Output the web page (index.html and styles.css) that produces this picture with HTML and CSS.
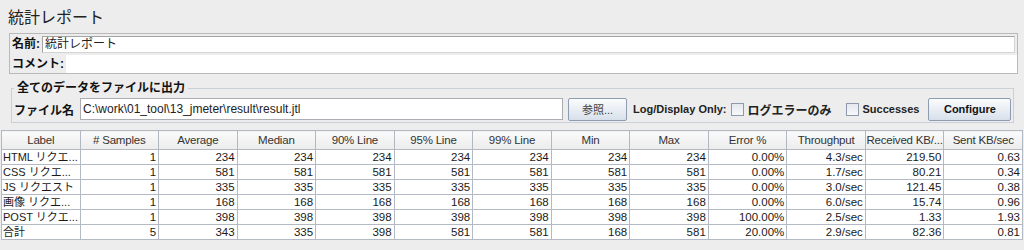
FILE: index.html
```html
<!DOCTYPE html>
<html lang="ja">
<head>
<meta charset="utf-8">
<title>統計レポート</title>
<link rel="stylesheet" href="styles.css">
</head>
<body>
<div class="title">統計レポート</div>
<div class="name-panel">
  <div class="row name-row"><span class="lbl">名前:</span><div class="field">統計レポート</div></div>
  <div class="row comment-row"><span class="lbl">コメント:</span><div class="field comment"></div></div>
</div>
<fieldset class="file-panel">
  <legend>全てのデータをファイルに出力</legend>
  <div class="file-row">
    <span class="file-lbl">ファイル名</span>
    <div class="path">C:\work\01_tool\13_jmeter\result\result.jtl</div>
    <button class="btn browse">参照...</button>
    <span class="bold only">Log/Display Only:</span>
    <span class="check"></span><span class="bold cjk">ログエラーのみ</span>
    <span class="check succ"></span><span class="bold">Successes</span>
    <button class="btn configure">Configure</button>
  </div>
</fieldset>
<table class="stats">
  <thead>
    <tr><th>Label</th><th># Samples</th><th>Average</th><th>Median</th><th>90% Line</th><th>95% Line</th><th>99% Line</th><th>Min</th><th>Max</th><th>Error %</th><th>Throughput</th><th>Received KB/...</th><th>Sent KB/sec</th></tr>
  </thead>
  <tbody>
    <tr><td>HTML リクエ...</td><td>1</td><td>234</td><td>234</td><td>234</td><td>234</td><td>234</td><td>234</td><td>234</td><td>0.00%</td><td>4.3/sec</td><td>219.50</td><td>0.63</td></tr>
    <tr><td>CSS リクエ...</td><td>1</td><td>581</td><td>581</td><td>581</td><td>581</td><td>581</td><td>581</td><td>581</td><td>0.00%</td><td>1.7/sec</td><td>80.21</td><td>0.34</td></tr>
    <tr><td>JS リクエスト</td><td>1</td><td>335</td><td>335</td><td>335</td><td>335</td><td>335</td><td>335</td><td>335</td><td>0.00%</td><td>3.0/sec</td><td>121.45</td><td>0.38</td></tr>
    <tr><td>画像 リクエ...</td><td>1</td><td>168</td><td>168</td><td>168</td><td>168</td><td>168</td><td>168</td><td>168</td><td>0.00%</td><td>6.0/sec</td><td>15.74</td><td>0.96</td></tr>
    <tr><td>POST リクエ...</td><td>1</td><td>398</td><td>398</td><td>398</td><td>398</td><td>398</td><td>398</td><td>398</td><td>100.00%</td><td>2.5/sec</td><td>1.33</td><td>1.93</td></tr>
    <tr><td>合計</td><td>5</td><td>343</td><td>335</td><td>398</td><td>581</td><td>581</td><td>168</td><td>581</td><td>20.00%</td><td>2.9/sec</td><td>82.36</td><td>0.81</td></tr>
  </tbody>
</table>
</body>
</html>
```
FILE: styles.css
```css
html, body {
  margin: 0;
  padding: 0;
  background: #ededed;
  font-family: "Liberation Sans", "Noto Sans CJK JP", sans-serif;
  color: #1a1a1a;
}

.title {
  padding: 8px 0 0 8px;
  font-size: 16px;
  line-height: 20px;
  height: 20px;
  color: #222;
}

.name-panel {
  margin: 5px 0 0 9px;
  width: 1005px;
  border: 1px solid #b9b9b9;
  padding: 2px 0 0 2px;
  display: flex;
  flex-direction: column;
  gap: 2px;
  box-sizing: content-box;
}

.row {
  display: flex;
  align-items: center;
}

.name-row {
  height: 17px;
  padding-right: 2px;
}

.comment-row {
  height: 18px;
}

.lbl {
  font-size: 12px;
  font-weight: bold;
  line-height: 17px;
  color: #111;
  padding-right: 2px;
  white-space: nowrap;
}

.field {
  flex: 1;
  height: 15px;
  background: #fff;
  border: 1px solid #a3a3a3;
  border-right-color: #d4d4d4;
  border-bottom-color: #d4d4d4;
  font-size: 12px;
  line-height: 15px;
  padding-left: 2px;
  color: #222;
}

.field.comment {
  height: 18px;
  border: none;
}

.file-panel {
  margin: 7px 0 0 11px;
  width: 999px;
  border: 1px solid #c9d0d9;
  padding: 0 0 1px 2px;
  box-sizing: content-box;
}

.file-panel legend {
  font-size: 12px;
  font-weight: bold;
  line-height: 14px;
  padding: 0 3px;
  margin-left: 0;
  color: #111;
}

.file-row {
  display: flex;
  align-items: center;
  height: 24px;
  padding-top: 2px;
  white-space: nowrap;
}

.file-row > * {
  flex-shrink: 0;
}

.file-lbl {
  font-size: 12px;
  font-weight: bold;
  width: 66px;
  color: #111;
}

.path {
  width: 479px;
  height: 20px;
  background: #fff;
  border: 1px solid #abadb3;
  font-size: 12px;
  line-height: 20px;
  padding-left: 2px;
  color: #222;
}

.btn {
  height: 23px;
  border: 1px solid #8d9cb0;
  border-radius: 2px;
  background: linear-gradient(#fbfcfd, #e9eef4 50%, #d7e0ea);
  font-family: "Liberation Sans", "Noto Sans CJK JP", sans-serif;
  padding: 0;
  color: #111;
}

.browse {
  width: 59px;
  margin-left: 5px;
  font-size: 11px;
  color: #444;
}

.bold {
  font-size: 11px;
  font-weight: bold;
  color: #222;
}

.bold.cjk {
  font-size: 12px;
}

.only {
  margin-left: 6px;
}

.check {
  width: 11px;
  height: 11px;
  border: 1px solid #8e9aab;
  background: linear-gradient(#e4e9ef, #f6f8fa);
  margin: 0 4px 0 4px;
}

.check.succ {
  margin-left: 14px;
}

.configure {
  width: 83px;
  margin-left: 9px;
  font-size: 11px;
  font-weight: bold;
}

.stats {
  margin: 7px 0 0 1px;
  width: 1022px;
  border-collapse: collapse;
  table-layout: fixed;
  font-size: 11.5px;
}

.stats th {
  height: 18px;
  padding: 0;
  font-weight: normal;
  color: #333;
  background: linear-gradient(#fafafa, #ececec);
  border: 1px solid #b3b9c2;
  text-align: center;
  line-height: 18px;
  white-space: nowrap;
  overflow: hidden;
  letter-spacing: -0.2px;
}

.stats td {
  height: 14px;
  padding: 0 2px;
  line-height: 14px;
  background: #fff;
  border: 1px solid #b3bac5;
  text-align: right;
  color: #1a1a1a;
  white-space: nowrap;
  overflow: hidden;
}

.stats td:first-child {
  text-align: left;
  padding-left: 1px;
  font-size: 11px;
}
```
